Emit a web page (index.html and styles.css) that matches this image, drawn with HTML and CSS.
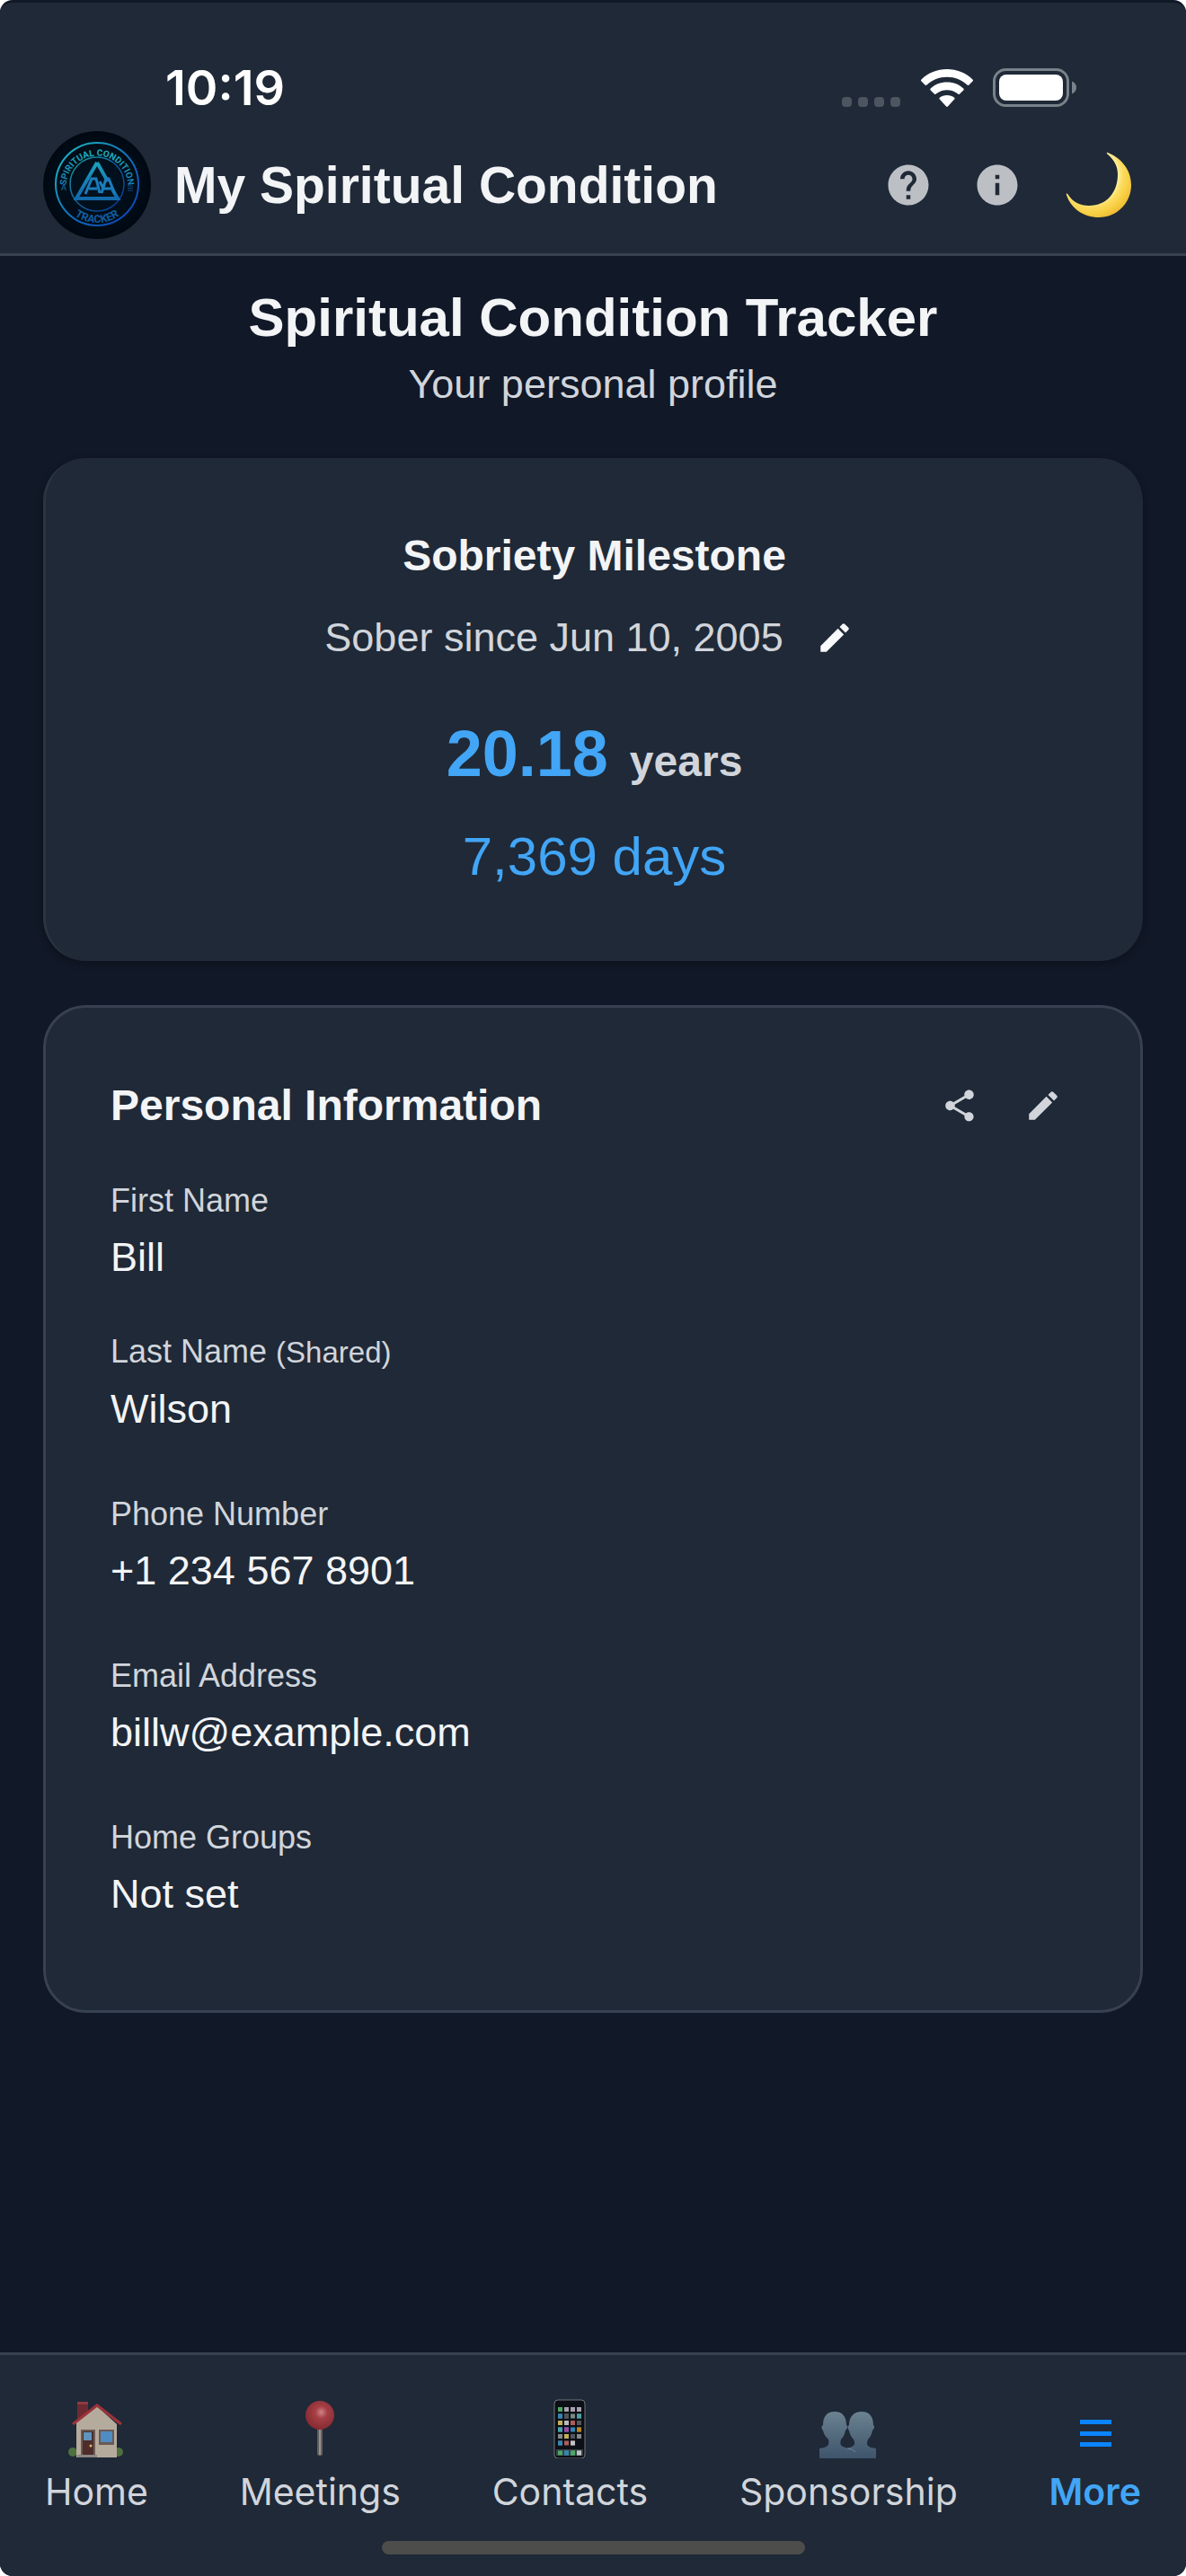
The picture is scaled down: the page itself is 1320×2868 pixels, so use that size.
FILE: index.html
```html
<!DOCTYPE html>
<html lang="en">
<head>
    <meta charset="UTF-8">
    <meta name="viewport" content="width=device-width, initial-scale=1.0">
    <title>My Spiritual Condition</title>
    <link rel="stylesheet" href="styles.css">
</head>
<body>
    <div class="app">
        <header class="header">
            <div class="status-bar">
                <span class="time">10:19</span>
                <div class="status-icons">
                    <svg width="66" height="42" viewBox="0 0 66 42" fill="#4d5560">
                        <rect x="0" y="31" width="11" height="11" rx="4"/>
                        <rect x="18" y="31" width="11" height="11" rx="4"/>
                        <rect x="36" y="31" width="11" height="11" rx="4"/>
                        <rect x="54" y="31" width="11" height="11" rx="4"/>
                    </svg>
                    <svg class="wifi" width="58" height="42" viewBox="0 0 58 42" fill="#fff">
                        <path d="M29 0C40 0 50 4 57.500 11.500Q58.500 12.500 57.500 13.500L53.500 17.500Q52.500 18.500 51.500 17.500C45 12 38 8.800 29 8.800S13 12 6.500 17.500Q5.500 18.500 4.500 17.500L.5 13.500Q-.5 12.500 .5 11.500C8 4 18 0 29 0Z"/>
                        <path d="M29 14.500C36.500 14.500 42.500 17 47.300 21.500Q48.300 22.500 47.300 23.500L43.200 27.500Q42.200 28.500 41.200 27.500C37.500 24.700 33.500 23.200 29 23.200S20.500 24.700 16.800 27.500Q15.800 28.500 14.800 27.500L10.700 23.500Q9.700 22.500 10.700 21.500C15.500 17 21.500 14.500 29 14.500Z"/>
                        <path d="M29 29C32.200 29 35 30 37.200 31.800Q38 32.600 37.200 33.500L29.900 41.500Q29 42.300 28.100 41.500L20.800 33.500Q20 32.600 20.800 31.800C23 30 25.800 29 29 29Z"/>
                    </svg>
                    <svg class="battery" width="94" height="44" viewBox="0 0 94 44">
                        <rect x="1.500" y="1.500" width="82" height="40" rx="13" fill="none" stroke="#79818a" stroke-width="3"/>
                        <rect x="7" y="7" width="71" height="29" rx="8" fill="#fff"/>
                        <path d="M88 14.500C91.500 16 93 18.500 93 21.500S91.500 27 88 28.500Z" fill="#79818a"/>
                    </svg>
                </div>
            </div>

            <div class="top-row">
                <svg class="logo" viewBox="0 0 120 120">
                    <defs>
                        <linearGradient id="neon" x1="0" y1="0" x2="1" y2="1">
                            <stop offset="0" stop-color="#1cc4c8"/>
                            <stop offset=".5" stop-color="#1272b8"/>
                            <stop offset="1" stop-color="#0b3bb4"/>
                        </linearGradient>
                        <linearGradient id="neonDown" gradientUnits="userSpaceOnUse" x1="0" y1="18" x2="0" y2="102">
                            <stop offset="0" stop-color="#1fb9c4"/>
                            <stop offset=".6" stop-color="#146fae"/>
                            <stop offset="1" stop-color="#0f58a0"/>
                        </linearGradient>
                        <radialGradient id="disc">
                            <stop offset="0" stop-color="#021322"/>
                            <stop offset=".8" stop-color="#010c17"/>
                            <stop offset="1" stop-color="#010812"/>
                        </radialGradient>
                        <path id="arcTop" d="M25.500 62A34.500 34.500 0 1 1 94.500 62"/>
                        <path id="arcBottom" d="M17 59A43 43 0 0 0 103 59"/>
                    </defs>
                    <circle cx="60" cy="60" r="60" fill="url(#disc)"/>
                    <circle cx="60" cy="59" r="46" fill="none" stroke="url(#neon)" stroke-width="2"/>
                    <circle cx="60" cy="59" r="30" fill="none" stroke="url(#neon)" stroke-width="1.500" opacity=".8"/>
                    <g fill="url(#neonDown)" font-weight="700" text-anchor="middle">
                        <text font-family="'Liberation Sans Narrow', Roboto, sans-serif" font-size="10"><textPath href="#arcTop" startOffset="50%">SPIRITUAL CONDITION</textPath></text>
                        <text font-family="Roboto, sans-serif" font-size="12"><textPath href="#arcBottom" startOffset="50%">TRACKER</textPath></text>
                        <text font-family="Roboto, sans-serif" x="23" y="66" font-size="9" font-weight="400">A</text>
                    </g>
                    <path d="M94 61H100M94 63.500H100M94 66H100" stroke="#0d4a86" stroke-width="1"/>
                    <path d="M60 35L37 75H83L77 65M60 35L72 56" fill="none" stroke="url(#neonDown)" stroke-width="4"/>
                    <path d="M47 70L54 53H59L63 69M51 64H60M65 69L70 53H73L80 70M67 64H76M63 56L67 64" fill="none" stroke="#1a7dbd" stroke-width="3"/>
                </svg>
                <div class="app-name">My Spiritual Condition</div>
                <div class="actions">
                    <button class="icon-btn" type="button" aria-label="Help">
                        <svg width="54" height="54" viewBox="0 0 24 24" fill="#bcc0c5"><path d="M12 2C6.480 2 2 6.480 2 12s4.480 10 10 10 10-4.480 10-10S17.520 2 12 2zm1 17h-2v-2h2v2zm2.070-7.750l-.9.920C13.450 12.900 13 13.500 13 15h-2v-.5c0-1.100.45-2.100 1.170-2.830l1.240-1.260c.37-.36.59-.86.59-1.410 0-1.100-.9-2-2-2s-2 .9-2 2H8c0-2.210 1.790-4 4-4s4 1.790 4 4c0 .88-.36 1.680-.93 2.250z"/></svg>
                    </button>
                    <button class="icon-btn" type="button" aria-label="About">
                        <svg width="54" height="54" viewBox="0 0 24 24" fill="#bcc0c5"><path d="M12 2C6.480 2 2 6.480 2 12s4.480 10 10 10 10-4.480 10-10S17.520 2 12 2zm1 15h-2v-6h2v6zm0-8h-2V7h2v2z"/></svg>
                    </button>
                    <button class="icon-btn theme-btn" type="button" aria-label="Toggle dark mode">
                        <svg width="74" height="74" viewBox="0 0 74 74">
                            <defs>
                                <radialGradient id="moon" gradientUnits="userSpaceOnUse" cx="28" cy="26" r="50">
                                    <stop offset=".6" stop-color="#fff0a0"/>
                                    <stop offset=".72" stop-color="#fbdb5e"/>
                                    <stop offset=".88" stop-color="#f8cc3f"/>
                                    <stop offset="1" stop-color="#eebb35"/>
                                </radialGradient>
                            </defs>
                            <path d="M47 1C62 7 73 20 73 37C73 57 57 73 37 73C20 73 6 63 1 48C0 46 2 46 3 48C8 56 16 60 26 60C46 60 58 45 58 25C58 16 54 9 47 3C45 1 45.500 .3 47 1Z" fill="url(#moon)"/>
                        </svg>
                    </button>
                </div>
            </div>
        </header>

        <main class="content">
            <h1>Spiritual Condition Tracker</h1>
            <p class="subtitle">Your personal profile</p>

            <section class="card milestone">
                <h2>Sobriety Milestone</h2>
                <div class="since">
                    <span>Sober since Jun 10, 2005</span>
                    <button class="icon-btn" type="button" aria-label="Edit sobriety date">
                        <svg width="42" height="42" viewBox="0 0 24 24" fill="#f9fafb"><path d="M3 17.250V21h3.750L17.810 9.940l-3.750-3.750L3 17.250zM20.710 7.040c.39-.39.39-1.020 0-1.410l-2.340-2.340c-.39-.39-1.020-.39-1.410 0l-1.830 1.830 3.750 3.750 1.830-1.830z"/></svg>
                    </button>
                </div>
                <div class="years"><strong>20.18</strong><span>years</span></div>
                <div class="days">7,369 days</div>
            </section>

            <section class="card info">
                <div class="card-head">
                    <h2>Personal Information</h2>
                    <div class="card-actions">
                        <button class="icon-btn" type="button" aria-label="Share">
                            <svg width="42" height="42" viewBox="0 0 24 24" fill="#d1d5db"><path d="M18 16.080c-.76 0-1.440.3-1.960.77L8.910 12.700c.05-.23.09-.46.09-.7s-.04-.47-.09-.7l7.050-4.110c.54.5 1.250.81 2.040.81 1.660 0 3-1.340 3-3s-1.340-3-3-3-3 1.340-3 3c0 .24.04.47.09.7L8.040 9.810C7.500 9.310 6.790 9 6 9c-1.660 0-3 1.340-3 3s1.340 3 3 3c.79 0 1.500-.31 2.040-.81l7.120 4.160c-.05.21-.08.43-.08.65 0 1.610 1.310 2.920 2.920 2.920s2.920-1.310 2.920-2.920-1.310-2.920-2.920-2.920z"/></svg>
                        </button>
                        <button class="icon-btn" type="button" aria-label="Edit profile">
                            <svg width="42" height="42" viewBox="0 0 24 24" fill="#d1d5db"><path d="M3 17.250V21h3.750L17.810 9.940l-3.750-3.750L3 17.250zM20.710 7.040c.39-.39.39-1.020 0-1.410l-2.340-2.340c-.39-.39-1.020-.39-1.410 0l-1.830 1.830 3.750 3.750 1.830-1.830z"/></svg>
                        </button>
                    </div>
                </div>
                <dl class="fields">
                    <div class="field name">
                        <dt>First Name</dt>
                        <dd>Bill</dd>
                    </div>
                    <div class="field">
                        <dt>Last Name <small>(Shared)</small></dt>
                        <dd>Wilson</dd>
                    </div>
                    <div class="field">
                        <dt>Phone Number</dt>
                        <dd>+1 234 567 8901</dd>
                    </div>
                    <div class="field">
                        <dt>Email Address</dt>
                        <dd>billw@example.com</dd>
                    </div>
                    <div class="field">
                        <dt>Home Groups</dt>
                        <dd>Not set</dd>
                    </div>
                </dl>
            </section>
        </main>

        <footer class="bottom">
            <nav class="nav">
                <a class="nav-item" href="#home">
                    <svg width="66" height="66" viewBox="0 0 66 66">
                        <circle cx="7" cy="59" r="5" fill="#4f7040"/>
                        <circle cx="58" cy="59" r="5" fill="#4f7040"/>
                        <path d="M12 3H24V15L12 25Z" fill="#6e2a31"/>
                        <path d="M12 3H24V6H12Z" fill="#8d3a40"/>
                        <path d="M11 26L34 8L56 28V65H11Z" fill="#b5ab9c"/>
                        <path d="M7 28L34 7L61 28" fill="none" stroke="#9c323a" stroke-width="3"/>
                        <path d="M16 34H32V63H16Z" fill="#6a5a55"/>
                        <path d="M18 36H30V63H18Z" fill="#4d2c2b"/>
                        <path d="M19 37H28V46H19Z" fill="#5f94bd"/>
                        <circle cx="27" cy="52" r="1.500" fill="#d8b56a"/>
                        <path d="M36 34H53V51H36Z" fill="#6a5a55"/>
                        <path d="M38 36H51V48H38Z" fill="#4f8cc2"/>
                        <path d="M12 62H34V65H12Z" fill="#8b8782"/>
                    </svg>
                    <span>Home</span>
                </a>
                <a class="nav-item" href="#meetings">
                    <svg width="66" height="66" viewBox="0 0 66 66">
                        <defs>
                            <radialGradient id="pin" cx=".55" cy=".4" r=".6">
                                <stop offset="0" stop-color="#cf8585"/>
                                <stop offset=".35" stop-color="#a63f45"/>
                                <stop offset="1" stop-color="#852a32"/>
                            </radialGradient>
                        </defs>
                        <rect x="30" y="32" width="6" height="31" rx="2" fill="#625f60"/>
                        <rect x="32" y="34" width="2" height="28" fill="#99918c"/>
                        <circle cx="33" cy="18" r="16" fill="url(#pin)"/>
                    </svg>
                    <span>Meetings</span>
                </a>
                <a class="nav-item" href="#contacts">
                    <svg width="66" height="66" viewBox="0 0 66 66">
                        <rect x="16" y="1" width="34" height="65" rx="4" fill="#0c1016" stroke="#72777d" stroke-width="1"/>
                        <path d="M18 56H48V63H18Z" fill="#3a4148"/>
                        <g stroke-width="5" stroke-dasharray="5 2" fill="none">
                            <path d="M20 11.500H48" stroke="#a9a0ae"/>
                            <path d="M20 19H48" stroke="#7b8982"/>
                            <path d="M20 26.500H48" stroke="#b9b9b6"/>
                            <path d="M20 34H48" stroke="#3187b5"/>
                            <path d="M20 41.500H48" stroke="#85898a"/>
                            <path d="M20 49H39" stroke="#b05b5b"/>
                            <path d="M20 60H48" stroke="#4ca767"/>
                        </g>
                        <path d="M20 9H25V14H20ZM34 57.500H39V62.500H34Z" fill="#4ca767"/>
                        <path d="M20 16.500H25V21.500H20ZM20 46.500H25V51.500H20ZM27 57.500H32V62.500H27Z" fill="#3187b5"/>
                        <path d="M27 16.500H32V21.500H27ZM41 24H46V29H41ZM34 39H39V44H34Z" fill="#50565a"/>
                        <path d="M41 16.500H46V21.500H41ZM20 31.500H25V36.500H20Z" fill="#4aa2ad"/>
                        <path d="M20 24H25V29H20ZM27 39H32V44H27Z" fill="#c3ae5c"/>
                        <path d="M34 24H39V29H34Z" fill="#b05b5b"/>
                        <path d="M27 31.500H32V36.500H27Z" fill="#a04aa8"/>
                        <path d="M41 31.500H46V36.500H41Z" fill="#bd861e"/>
                        <path d="M34 46.500H39V51.500H34ZM41 57.500H46V62.500H41Z" fill="#bfc4c8"/>
                    </svg>
                    <span>Contacts</span>
                </a>
                <a class="nav-item" href="#sponsorship">
                    <svg width="66" height="66" viewBox="0 0 66 66">
                        <defs>
                            <linearGradient id="people" x1="0" y1="0" x2="0" y2="1">
                                <stop offset="0" stop-color="#6b8291"/>
                                <stop offset="1" stop-color="#3d546b"/>
                            </linearGradient>
                        </defs>
                        <path d="M18 14C27 14 31 20 31 29C33 30 32 33 30 35C29 40 27 43 25 45C23 52 26 53 32 54.500C39 53 42 51 39 45C37 43 35 40 34 35C32 33 32 30 34 29C34 20 39 14 48 14C57 14 61 20 61 29C63 30 62 33 60 35C59 40 57 43 55 45C52 52 56 54 64 55V66H1V55C9 54 13 52 11 45C9 43 6 40 5 35C3 33 3 30 5 29C5 20 9 14 18 14Z" fill="url(#people)"/>
                        <path d="M32 55Q38 55 41 59" fill="none" stroke="#71869a" stroke-width="1"/>
                    </svg>
                    <span>Sponsorship</span>
                </a>
                <a class="nav-item active" href="#more" aria-current="page">
                    <svg width="66" height="66" viewBox="0 0 66 66" fill="#0a84ff">
                        <path d="M16 23H51V28H16ZM16 36H51V41H16ZM16 48H51V53H16Z"/>
                    </svg>
                    <span>More</span>
                </a>
            </nav>
            <div class="home-bar"></div>
        </footer>
    </div>
</body>
</html>
```
FILE: styles.css
```css
* {
    box-sizing: border-box;
    margin: 0;
    padding: 0;
}

body {
    background: #fff;
    font-family: "Liberation Sans", Arial, sans-serif;
    color: #f3f4f6;
}

.app {
    display: flex;
    flex-direction: column;
    min-height: 100vh;
    background: #111827;
    border-top: 3px solid #111827;
    border-radius: 14px;
    overflow: hidden;
}

svg {
    display: block;
    flex: none;
}

.header {
    background: #1f2937;
    border-bottom: 3px solid #374151;
    padding: 65px 48px 16px;
}

/* phone status bar */
.status-bar {
    display: flex;
    justify-content: space-between;
    align-items: center;
    padding: 0 73px 18px 136px;
}

.time {
    font-family: Inter, sans-serif;
    font-size: 54px;
    font-weight: 600;
    line-height: 60px;
    color: #fff;
}

.status-icons {
    display: flex;
    align-items: center;
}

.wifi {
    margin: 0 22px;
}

.top-row {
    display: flex;
    align-items: center;
}

.logo {
    width: 120px;
    height: 120px;
    margin-right: 26px;
}

.app-name {
    font-size: 57px;
    font-weight: 700;
    line-height: 72px;
}

.actions {
    display: flex;
    align-items: center;
    gap: 45px;
    margin-left: auto;
    padding-right: 12px;
}

.icon-btn {
    display: flex;
    align-items: center;
    justify-content: center;
    background: none;
    border: none;
    cursor: pointer;
}

.theme-btn {
    margin-left: 4px;
}

.content {
    padding: 33px 48px 48px;
}

h1 {
    font-size: 60px;
    line-height: 72px;
    text-align: center;
}

.subtitle {
    margin: 11px 0 55px;
    font-size: 45px;
    line-height: 54px;
    text-align: center;
    color: #d1d5db;
}

h2 {
    font-size: 48px;
    line-height: 60px;
}

.card {
    background: #1f2937;
    border-radius: 48px;
}

.milestone {
    display: flex;
    flex-direction: column;
    align-items: center;
    padding: 79px 72px 80px;
    margin-bottom: 49px;
    border-left: 3px solid #2b3542;
    box-shadow: 0 3px 9px rgba(0, 0, 0, 0.3);
}

.since {
    display: flex;
    align-items: center;
    margin: 34px 0 60px;
    font-size: 45px;
    line-height: 54px;
    color: #d1d5db;
}

.since .icon-btn {
    margin-left: 24px;
    padding: 0 12px;
}

.years {
    display: flex;
    align-items: baseline;
    gap: 24px;
    margin-bottom: 37px;
}

.years strong {
    font-size: 72px;
    line-height: 84px;
    color: #42a5f5;
}

.years span {
    font-size: 48px;
    font-weight: 700;
    line-height: 60px;
    color: #d1d5db;
}

.days {
    font-size: 60px;
    line-height: 72px;
    color: #42a5f5;
}

.info {
    border: 3px solid #374151;
    padding: 73px 72px 102px;
}

.card-head {
    display: flex;
    justify-content: space-between;
    align-items: center;
    margin-bottom: 49px;
}

.card-actions {
    display: flex;
    gap: 21px;
}

.card-actions .icon-btn {
    width: 72px;
    height: 72px;
}

.field {
    margin-bottom: 69px;
}

.field.name {
    margin-bottom: 57px;
}

.field:last-child {
    margin-bottom: 0;
}

dt {
    font-size: 36px;
    line-height: 42px;
    margin-bottom: 15px;
    color: #d1d5db;
}

dt small {
    font-size: 33px;
}

dd {
    font-size: 45px;
    line-height: 54px;
}

/* bottom navigation */
.bottom {
    margin-top: auto;
    background: #1f2937;
    border-top: 3px solid #374151;
    padding: 49px 50px 24px;
}

.nav {
    display: flex;
    justify-content: space-between;
}

.nav-item {
    display: flex;
    flex-direction: column;
    align-items: center;
    gap: 13px;
    font-family: Inter, sans-serif;
    font-size: 41px;
    line-height: 48px;
    color: #d1d5db;
    text-decoration: none;
}

.nav-item.active {
    color: #42a5f5;
    font-weight: 600;
}

.home-bar {
    width: 471px;
    max-width: 60%;
    height: 15px;
    margin: 31px auto 0;
    border-radius: 8px;
    background: #4d4d4c;
}
```
